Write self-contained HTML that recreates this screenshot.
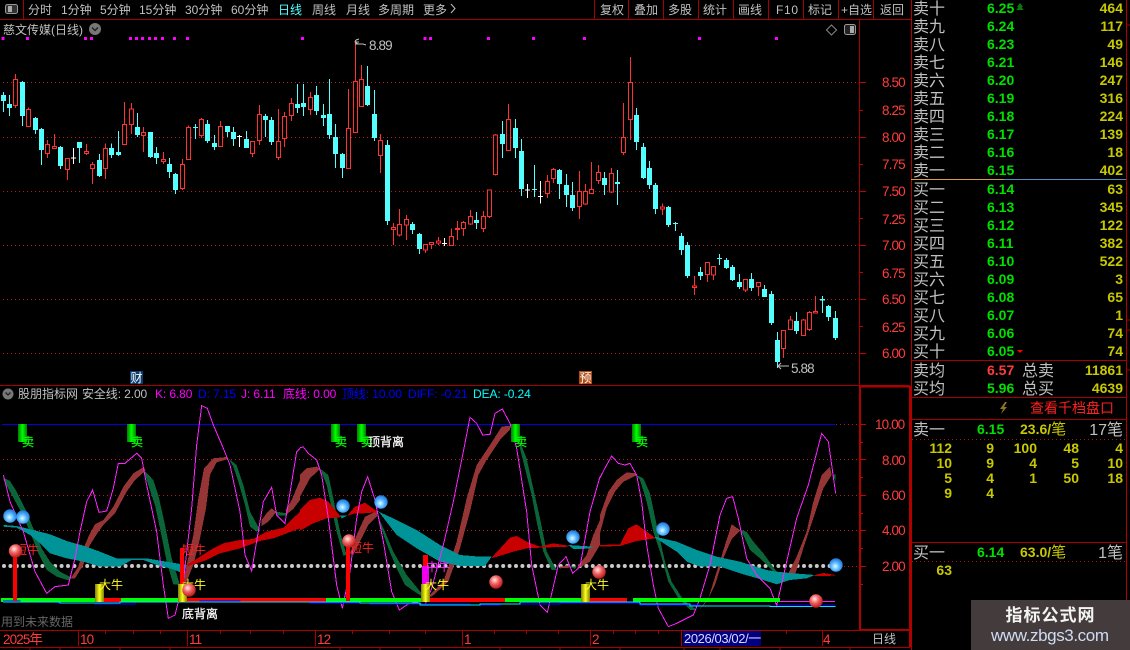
<!DOCTYPE html>
<html><head><meta charset="utf-8"><title>K线</title>
<style>
html,body{margin:0;padding:0;background:#000;width:1130px;height:650px;overflow:hidden}
svg{display:block;position:absolute;left:0;top:0}
text{font-family:"Liberation Sans","WenQuanYi Zen Hei","Noto Sans CJK SC",sans-serif;white-space:pre}
.t{font-size:12px;fill:#c0c0c0}
.l{font-size:16px;fill:#c0c0c0}
.a{font-size:13.5px;letter-spacing:-.9px;fill:#ff3c3c}
.g{font-size:14px;font-weight:bold;fill:#00e000}
.y{font-size:14px;font-weight:bold;fill:#c8c800;text-anchor:end}
.h{font-size:12px;letter-spacing:-.1px}
</style></head><body>
<svg width="1130" height="650" viewBox="0 0 1130 650" xmlns="http://www.w3.org/2000/svg">
<defs>
<radialGradient id="rb" cx=".4" cy=".35" r=".7"><stop offset="0" stop-color="#ffe8e8"/><stop offset=".45" stop-color="#f06060"/><stop offset="1" stop-color="#b01010"/></radialGradient>
<radialGradient id="bb" cx=".45" cy=".6" r=".65"><stop offset="0" stop-color="#d8ffff"/><stop offset=".5" stop-color="#50b0ff"/><stop offset="1" stop-color="#1468c8"/></radialGradient>
<linearGradient id="yb"><stop offset="0" stop-color="#808000"/><stop offset=".5" stop-color="#ffff20"/><stop offset="1" stop-color="#808000"/></linearGradient>
<linearGradient id="gb"><stop offset="0" stop-color="#008000"/><stop offset=".5" stop-color="#00ff00"/><stop offset="1" stop-color="#008000"/></linearGradient>
</defs>
<rect width="1130" height="650" fill="#000"/>

<!-- toolbar -->
<g shape-rendering="crispEdges" fill="none" stroke="#a80000">
<path d="M0 19.5H911M23.5 0V19M594.5 0V19M628.5 0V19M663.5 0V19M698.5 0V19M733.5 0V19M768.5 0V19M803.5 0V19M838.5 0V19M873.5 0V19"/>
<path d="M859.5 19V385M0 385.5H910M859.5 385V630" stroke-width="1"/>
<path d="M860 386.5H910M860 630H910M860 386V630M910 386V647" stroke="#b00000" stroke-width="2"/>
<path d="M0 630.5H910M0 647.5H910M78.5 631V646M187.5 631V646M315.5 631V646M462.5 631V646M590.5 631V646M681.5 631V646M822.5 631V646"/>
<path d="M105.5 631v3M133.5 631v3M160.5 631v3M220.5 631v3M250.5 631v3M283.5 631v3M352.5 631v3M389.5 631v3M425.5 631v3M494.5 631v3M526.5 631v3M558.5 631v3M613.5 631v3M635.5 631v3M658.5 631v3M786.5 631v3"/>
<path d="M30 647v3M60 647v3M120 647v3M170 647v3M340 647v3M380 647v3M420 647v3M500 647v3M560 647v3M620 647v3M684 647v3M720 647v3M780 647v3M850 647v3"/>
<path d="M911.5 0V650M1126.5 0V650" stroke="#b00000"/>
<path d="M911 360.5H1126M911 397.5H1126M911 419.5H1126M911 542.5H1126M1127 25h3M1127 320h3M1127 330h3M1127 370h3"/>
</g>
<rect x="5.5" y="4.5" width="12" height="9" rx="2" fill="#333" stroke="#999"/><rect x="8" y="6" width="4" height="6" fill="#aaa"/>
<g class="t">
<text x="28" y="14" class="t">分时</text><text x="61" y="14" class="t">1分钟</text><text x="100" y="14" class="t">5分钟</text><text x="139" y="14" class="t">15分钟</text><text x="185" y="14" class="t">30分钟</text><text x="231" y="14" class="t">60分钟</text>
<text x="278" y="14" class="t" style="fill:#54ffff">日线</text><text x="312" y="14" class="t">周线</text><text x="346" y="14" class="t">月线</text><text x="378" y="14" class="t">多周期</text><text x="423" y="14" class="t">更多</text>
<path d="M451 4l4 4.5-4 4.5" fill="none" stroke="#c0c0c0"/>
<text x="600" y="14" class="t">复权</text><text x="634" y="14" class="t">叠加</text><text x="668" y="14" class="t">多股</text><text x="703" y="14" class="t">统计</text><text x="738" y="14" class="t">画线</text><text x="776" y="14" class="t" style="letter-spacing:.7px">F10</text><text x="808" y="14" class="t">标记</text><text x="841" y="14" class="t">+自选</text><text x="880" y="14" class="t">返回</text>
</g>

<!-- main chart title -->
<text x="3" y="34" class="t">慈文传媒(日线)</text>
<circle cx="95" cy="29" r="6" fill="#777"/><path d="M92 27.5l3 3 3-3" fill="none" stroke="#222" stroke-width="1.5"/>
<path d="M831.5 25l5 5-5 5-5-5z" fill="none" stroke="#888"/>
<rect x="844.5" y="24.5" width="11" height="10" rx="2" fill="#222" stroke="#999"/><rect x="850" y="26" width="4" height="7" fill="#aaa"/>

<!-- grid -->
<g fill="none" stroke="#b02020" stroke-dasharray="1 3" shape-rendering="crispEdges">
<path d="M3 82.5H859M3 137.5H859M3 191.5H859M3 245.5H859M3 299.5H859M3 353.5H859"/>
<path d="M3 459.5H835M3 495.5H835M3 530.5H835M836 424.5H859M836 566.5H859M836 459.5H859M836 495.5H859M836 530.5H859"/>
</g>
<path shape-rendering="crispEdges" fill="none" stroke="#c80000" d="M860 82.5h6M860 110.5h3M860 137.5h6M860 164.5h3M860 191.5h6M860 218.5h3M860 245.5h6M860 272.5h3M860 299.5h6M860 326.5h3M860 353.5h6M860 424.5h6M860 442.5h3M860 459.5h6M860 477.5h3M860 495.5h6M860 513.5h3M860 530.5h6M860 548.5h3M860 566.5h6M860 584.5h3"/>
<g class="a"><text x="882" y="87" class="a">8.50</text><text x="882" y="115" class="a">8.25</text><text x="882" y="142" class="a">8.00</text><text x="882" y="169" class="a">7.75</text><text x="882" y="196" class="a">7.50</text><text x="882" y="224" class="a">7.25</text><text x="882" y="250" class="a">7.00</text><text x="882" y="278" class="a">6.75</text><text x="882" y="304" class="a">6.50</text><text x="882" y="332" class="a">6.25</text><text x="882" y="358" class="a">6.00</text>
<text x="875" y="429" class="a">10.00</text><text x="882" y="465" class="a">8.00</text><text x="882" y="500" class="a">6.00</text><text x="882" y="535" class="a">4.00</text><text x="882" y="571" class="a">2.00</text></g>

<!-- markers -->
<path fill="#ff00ff" shape-rendering="crispEdges" d="M4 111h9v9h-9zM78 111h9v9h-9zM252 111h9v9h-9zM270 111h9v9h-9zM387 111h9v9h-9zM405 111h9v9h-9zM423 111h9v9h-9zM444 111h9v9h-9zM462 111h9v9h-9zM483 111h9v9h-9zM519 111h9v9h-9zM558 111h9v9h-9zM903 111h9v9h-9zM1270 111h9v9h-9zM1287 111h9v9h-9zM1461 111h9v9h-9zM1596 111h9v9h-9zM1749 111h9v9h-9zM2094 111h9v9h-9zM2325 111h9v9h-9z" transform="scale(.33333)"/>

<!-- candles -->
<g transform="scale(.33333)" shape-rendering="crispEdges">
<path fill="none" stroke="#ff3232" stroke-width="3" d="M46 222V324M85 322V380M142 420V474M163 402V447M202 474V540M259 432V465M277 486V552M316 430V537M373 306V435M394 309V402M430 381V456M490 456V492M547 477V570M565 376V480M604 354V414M661 363V441M757 424V471M778 315V435M835 327V480M853 336V441M874 294V363M931 276V345M1045 267V507M1066 120V399M1084 195V321M1141 402V519M1180 669V735M1198 627V710M1219 645V720M1276 733V759M1294 726V747M1315 711V735M1354 685V738M1372 663V720M1390 663V708M1411 630V675M1450 633V696M1468 568V654M1487 402V527M1525 312V453M1642 525V594M1660 504V549M1738 513V657M1756 552V615M1774 486V581M1795 495V552M1834 504V579M1870 309V465M1891 171V420M1987 610V645M2083 828V885M2122 786V846M2140 798V840M2236 837V876M2275 847V888M2350 990V1074M2371 948V990M2410 957V1008M2428 933V993M2446 888V939"/>
<path fill="#000" stroke="#ff3232" stroke-width="3" d="M40 238h12v79h-12zM79 328h12v52h-12zM136 433h12v28h-12zM157 439h12v7h-12zM196 475h12v34h-12zM253 454h12v6h-12zM271 493h12v13h-12zM310 445h12v61h-12zM367 373h12v61h-12zM388 327h12v46h-12zM424 397h12v9h-12zM484 478h12v7h-12zM541 493h12v73h-12zM559 382h12v97h-12zM598 358h12v49h-12zM655 379h12v61h-12zM751 424h12v37h-12zM772 343h12v78h-12zM829 424h12v49h-12zM847 349h12v67h-12zM868 310h12v37h-12zM925 292h12v37h-12zM1039 385h12v121h-12zM1060 244h12v154h-12zM1078 238h12v82h-12zM1135 421h12v45h-12zM1174 682h12v7h-12zM1192 673h12v32h-12zM1213 658h12v17h-12zM1270 733h12v17h-12zM1288 727h12v6h-12zM1309 723h12v6h-12zM1348 709h12v27h-12zM1366 685h12v3h-12zM1384 667h12v19h-12zM1405 649h12v23h-12zM1444 649h12v36h-12zM1462 570h12v80h-12zM1481 405h12v119h-12zM1519 358h12v94h-12zM1636 544h12v37h-12zM1654 508h12v28h-12zM1732 574h12v46h-12zM1750 574h12v38h-12zM1768 568h12v13h-12zM1789 517h12v25h-12zM1828 520h12v56h-12zM1864 412h12v46h-12zM1885 247h12v111h-12zM1981 621h12v6h-12zM2077 858h12v5h-12zM2116 787h12v37h-12zM2134 799h12v26h-12zM2230 838h12v32h-12zM2269 847h12v13h-12zM2344 991h12v55h-12zM2365 960h12v29h-12zM2404 960h12v47h-12zM2422 937h12v52h-12zM2440 934h12v5h-12z"/>
<path fill="none" stroke="#54ffff" stroke-width="3" d="M10 276V336M28 285V348M67 243V378M106 351V402M124 384V495M181 438V507M238 426V489M298 462V531M334 430V474M355 393V468M412 339V411M451 396V474M469 441V492M508 474V534M526 519V582M586 372V417M622 360V429M643 405V450M682 378V411M700 381V438M739 393V444M796 342V411M814 351V435M892 252V339M910 252V348M949 258V345M970 312V378M988 237V417M1006 372V504M1027 459V534M1102 198V318M1123 270V423M1162 420V675M1237 666V702M1258 699V762M1429 636V687M1507 363V474M1546 357V474M1564 417V588M1603 495V591M1678 507V597M1699 522V621M1717 546V633M1813 516V585M1852 510V615M1909 324V450M1930 429V537M1948 483V567M1966 549V642M2005 618V681M2026 666V693M2044 699V765M2062 726V834M2101 801V840M2158 762V795M2179 774V807M2197 795V843M2218 822V867M2254 819V873M2293 855V891M2314 873V975M2332 996V1104M2389 936V1002M2467 888V939M2485 915V963M2506 933V1020"/>
<path fill="#54ffff" d="M3 285h15v18h-15zM21 312h15v12h-15zM60 246h15v102h-15zM99 354h15v36h-15zM117 387h15v63h-15zM174 441h15v57h-15zM231 426h15v18h-15zM291 480h15v48h-15zM327 444h15v21h-15zM348 456h15v9h-15zM405 381h15v24h-15zM444 396h15v75h-15zM462 459h15v15h-15zM501 492h15v24h-15zM519 522h15v48h-15zM579 381h15v3h-15zM615 372h15v51h-15zM636 429h15v12h-15zM675 378h15v18h-15zM693 396h15v21h-15zM732 417h15v27h-15zM789 348h15v12h-15zM807 360h15v66h-15zM885 312h15v12h-15zM903 309h15v12h-15zM942 285h15v48h-15zM963 345h15v9h-15zM981 342h15v63h-15zM999 411h15v51h-15zM1020 462h15v42h-15zM1095 258h15v57h-15zM1116 342h15v72h-15zM1155 435h15v228h-15zM1230 672h15v18h-15zM1251 702h15v45h-15zM1422 660h15v9h-15zM1500 402h15v30h-15zM1539 384h15v60h-15zM1557 453h15v114h-15zM1596 567h15v3h-15zM1671 510h15v42h-15zM1692 555h15v30h-15zM1710 585h15v39h-15zM1806 534h15v21h-15zM1845 546h15v6h-15zM1902 345h15v81h-15zM1923 441h15v93h-15zM1941 504h15v51h-15zM1959 555h15v72h-15zM1998 621h15v54h-15zM2019 669h15v3h-15zM2037 708h15v42h-15zM2055 735h15v93h-15zM2094 816h15v12h-15zM2151 774h15v3h-15zM2172 780h15v24h-15zM2190 801h15v39h-15zM2211 846h15v15h-15zM2247 837h15v27h-15zM2286 867h15v24h-15zM2307 882h15v87h-15zM2325 1020h15v66h-15zM2382 963h15v30h-15zM2460 897h15v5h-15zM2478 918h15v33h-15zM2499 954h15v60h-15z"/>
<path fill="none" stroke="#fff" stroke-width="3" d="M220 444V492M213 474h15M718 405V441M711 409h15M1333 714V738M1326 730h15M1582 552V594M1575 570h15M1621 543V610M1614 590h15"/>
</g>

<!-- hi/lo labels -->
<g fill="none" stroke="#c0c0c0"><path d="M356 40l-1 2 3 2-3 0 8 0 3 1"/><path d="M356 40l3-1M356 42h3"/><path d="M778 366h11M778 366l3-3M778 366l3 3"/></g>
<text x="369" y="50" class="a" style="fill:#c0c0c0">8.89</text>
<text x="791" y="373" class="a" style="fill:#c0c0c0">5.88</text>
<rect x="130" y="371" width="13" height="13" fill="#0a3c6e"/><text x="130.5" y="382" style="font-size:12px;fill:#fff">财</text>
<rect x="579" y="371" width="13" height="13" fill="#b04a14"/><text x="579.5" y="382" style="font-size:12px;fill:#fff">预</text>

<!-- indicator header -->
<circle cx="8" cy="394" r="5.5" fill="#777"/><path d="M5.5 392.5l2.5 2.5 2.5-2.5" fill="none" stroke="#222" stroke-width="1.3"/>
<text x="18" y="398" class="t">股朋指标网</text>
<text x="82" y="398" class="h" style="fill:#c0c0c0">安全线: 2.00</text>
<text x="155" y="398" class="h" style="fill:#ff00ff">K: 6.80</text>
<text x="198" y="398" class="h" style="fill:#0000ff">D: 7.15</text>
<text x="241" y="398" class="h" style="fill:#ff00ff">J: 6.11</text>
<text x="283" y="398" class="h" style="fill:#ff00ff">底线: 0.00</text>
<text x="342" y="398" class="h" style="fill:#0000ff">顶线: 10.00</text>
<text x="408" y="398" class="h" style="fill:#0000ff">DIFF: -0.21</text>
<text x="473" y="398" class="h" style="fill:#00ffff">DEA: -0.24</text>

<path d="M2 424.5H835" stroke="#0000e0" shape-rendering="crispEdges"/>
<path d="M4 566H835" stroke="#c8c8c8" stroke-width="4" stroke-linecap="round" stroke-dasharray="0 6.4"/>

<!-- ribbons -->
<g shape-rendering="crispEdges">
<g transform="translate(0 385) scale(.33333)">
<g fill="#0a6638"><path d="M10 278L30 288 50 320 75 370 100 430 125 490 150 530 180 560 215 578 205 586 170 575 140 555 115 505 90 440 60 375 30 320 10 285z"/><path d="M435 258L460 285 475 330 495 420 515 520 540 600 520 598 500 530 480 430 465 360 445 300 435 268z"/><path d="M685 220L710 240 730 300 750 380 780 435 770 440 750 425 735 360 715 290 700 245z"/><path d="M830 380L860 385 860 392 830 392z"/></g>
<g fill="#953535"><path d="M212 580L235 545 250 490 270 445 285 418 310 405 340 365 370 305 400 265 432 245 436 258 405 285 380 320 345 385 310 420 295 440 270 480 250 540 225 580z"/><path d="M545 600L560 540 580 450 595 340 612 250 640 220 680 216 685 222 650 232 630 270 618 370 600 460 580 540 560 590z"/><path d="M785 405L800 385 815 370 830 382 820 392 805 410 785 423z"/><path d="M857 375L875 345 900 285 900 345 880 372 860 388z"/></g>
<path fill="#c80000" d="M560 540L600 515 640 490 670 475 720 465 760 462 800 440 850 428 900 380 900 430 860 445 820 460 780 468 720 490 660 505 620 525 590 535 565 543z"/>
<path fill="#009498" d="M10 420L50 423 100 435 150 448 200 468 250 482 300 500 350 520 400 520 440 520 500 530 560 540 550 565 510 550 470 540 430 525 395 525 360 545 300 545 250 530 200 520 150 505 120 475 90 450 50 428 10 425z"/>
</g>
<g transform="translate(300 385) scale(.33333)">
<g fill="#0a6638"><path d="M62 252L85 270 100 340 120 440 140 510 130 512 110 440 95 370 80 300 65 262z"/><path d="M232 390L255 440 280 500 320 570 365 625 362 632 315 600 290 550 265 490 240 420z"/><path d="M660 170L680 220 700 310 720 400 740 500 770 555 755 555 730 500 710 410 695 330 675 250 660 190z"/><path d="M810 545L830 545 825 552z"/></g>
<g fill="#953535"><path d="M0 270L20 250 50 245 60 252 30 280 0 335z"/><path d="M150 505L170 450 195 395 230 378 232 392 205 420 180 470 160 510z"/><path d="M385 635L430 590 470 470 500 340 530 240 570 180 605 125 630 122 630 135 600 165 560 225 535 270 510 380 480 490 445 590 395 635z"/><path d="M780 545L810 540 810 548 780 550z"/><path d="M830 548L860 510 880 450 900 405 900 480 870 530 845 545z"/></g>
<g fill="#c80000"><path d="M0 375L30 345 60 338 85 350 120 392 120 397 80 400 40 415 0 437z"/><path d="M142 392L165 365 195 353 230 378 230 382 190 385 165 385z"/><path d="M575 518L630 458 650 453 680 470 720 485 760 475 805 482 805 485 720 488 680 490 640 500 575 520z"/></g>
<g fill="#009498"><path d="M120 392L142 392 125 400z"/><path d="M232 378L290 405 350 435 420 480 480 510 540 515 575 515 555 543 480 543 420 530 350 490 290 450 240 385z"/><path d="M805 480L880 485 865 491 820 492z"/></g>
</g>
<g transform="translate(600 385) scale(.33333)">
<g fill="#0a6638"><path d="M108 270L130 280 150 325 170 420 195 530 215 590 250 645 290 675 270 675 235 640 205 590 180 500 160 440 140 350 120 285z"/><path d="M420 435L440 440 460 470 490 505 530 560 520 560 480 520 450 495 430 450z"/><path d="M697 272L707 267 707 288z"/></g>
<g fill="#953535"><path d="M0 390L25 320 50 285 80 262 108 265 108 272 70 290 45 320 20 370 0 445z"/><path d="M300 670L325 640 350 560 375 480 395 418 420 435 418 440 395 462 370 520 345 600 320 650 300 672z"/><path d="M565 565L590 515 620 440 640 350 665 270 690 245 695 270 670 310 640 400 610 490 585 570z"/></g>
<g fill="#c80000"><path d="M0 480L60 478 85 430 110 418 140 440 165 458 165 460 110 468 60 483 0 485z"/><path d="M645 570L670 564 707 570 707 572 645 573z"/></g>
<path fill="#009498" d="M165 455L230 470 290 495 350 515 420 530 500 555 530 560 580 565 645 570 620 580 570 585 530 598 490 585 420 565 360 545 300 545 260 530 230 500 165 458z"/>
</g>

<!-- KDJ -->
<g fill="none" stroke="#ff20ff" stroke-width="3">
<path transform="translate(0 385) scale(.33333)" d="M10 270L30 350 70 440 105 560 140 625 165 605 205 600 225 520 240 440 260 350 278 315 297 382 320 378 340 310 355 235 375 235 410 205 425 220 440 300 470 440 490 600 505 700 525 690 550 590 575 370 590 180 605 62 622 70 640 120 670 190 690 240 720 380 735 510 755 558 790 350 815 307 830 390 855 415 890 200 900 190"/>
<path transform="translate(300 385) scale(.33333)" d="M0 188L10 186 25 205 50 225 65 270 85 400 110 600 127 670 150 560 170 400 185 320 203 275 225 345 250 470 275 620 298 675 320 660 345 650 375 660 395 610 430 480 460 350 490 200 510 97 530 115 548 150 570 148 585 85 607 72 630 115 650 190 680 380 695 540 720 660 742 682 775 540 798 515 818 565 840 545 870 380 900 275"/>
<path transform="translate(600 385) scale(.33333)" d="M0 278L20 240 35 213 55 235 75 240 90 235 110 270 125 350 140 480 160 600 175 670 205 725 230 715 280 690 300 640 330 540 360 390 380 340 398 335 415 400 440 520 470 570 510 610 530 662 560 530 590 400 625 300 665 145 685 170 695 240 707 325"/>
</g>

<!-- lower line set -->
<path d="M1 600H95" stroke="#00ff00" stroke-width="4"/>
<path d="M104 600H121M187 600H326M430 600H505M581 600H627" stroke="#ff0000" stroke-width="4"/>
<path d="M121 600H178M326 600H421M505 600H581M633 600H780" stroke="#00ff00" stroke-width="4"/>
<path d="M780 601.5H835" stroke="#ff20ff"/>
<path fill="none" stroke="#0000ff" d="M3 601H20V602H58V603H95V604H135V602H200V601H240V602H310V603H370V604H470V605H500V604H560V603H640V605H700V606H780V605H835"/>
<path fill="none" stroke="#00e8ff" d="M3 602H60V603H120V602H200V602H290V602H360V603H420V605H480V604H520V602H640V604H690V606H770V606.5H835V606"/>

<!-- bars -->
<path fill="#ff0000" d="M13 552h4v49h-4zM180 548h4v40h-4zM346 545h4v56h-4zM423 555h5v25h-5z"/>
<rect x="422" y="566" width="7" height="34" fill="#ee00ee"/>
<g fill="url(#yb)"><rect x="95" y="584" width="9" height="18"/><rect x="178" y="584" width="9" height="18"/><rect x="421" y="584" width="9" height="18"/><rect x="581" y="584" width="9" height="18"/></g>
<g fill="url(#gb)"><rect x="18" y="424" width="9" height="18"/><rect x="127" y="424" width="9" height="18"/><rect x="331" y="424" width="9" height="18"/><rect x="357" y="424" width="9" height="18"/><rect x="511" y="424" width="9" height="18"/><rect x="632" y="424" width="9" height="18"/></g>
</g>

<g fill="#00ff00" style="font-size:12px">
<text x="22" y="446" style="font-size:12px;fill:#00ff00;stroke:#00ff00;stroke-width:.25">卖</text><text x="131" y="446" style="font-size:12px;fill:#00ff00;stroke:#00ff00;stroke-width:.25">卖</text><text x="335" y="446" style="font-size:12px;fill:#00ff00;stroke:#00ff00;stroke-width:.25">卖</text><text x="361" y="446" style="font-size:12px;fill:#00ff00;stroke:#00ff00;stroke-width:.25">卖</text><text x="515" y="446" style="font-size:12px;fill:#00ff00;stroke:#00ff00;stroke-width:.25">卖</text><text x="636" y="446" style="font-size:12px;fill:#00ff00;stroke:#00ff00;stroke-width:.25">卖</text>
</g>
<text x="368" y="446" style="font-size:12px;fill:#fff;stroke:#fff;stroke-width:.2">顶背离</text>
<text x="182" y="618" style="font-size:12px;fill:#fff;stroke:#fff;stroke-width:.2">底背离</text>
<g>
<text x="15" y="554" style="font-size:12px;fill:#ff2020">短牛</text><text x="182" y="554" style="font-size:12px;fill:#ff2020">短牛</text><text x="350" y="552" style="font-size:12px;fill:#ff2020">短牛</text>
</g>
<text x="426" y="571" style="font-size:12px;fill:#ff20ff">中牛</text>
<g><text x="99" y="589" style="font-size:12px;fill:#ffff20">大牛</text><text x="182" y="589" style="font-size:12px;fill:#ffff20">大牛</text><text x="425" y="589" style="font-size:12px;fill:#ffff20">大牛</text><text x="585" y="589" style="font-size:12px;fill:#ffff20">大牛</text></g>

<!-- balls -->
<g fill="url(#rb)"><circle cx="15.5" cy="551" r="6.7"/><circle cx="189" cy="590" r="6.7"/><circle cx="349" cy="541" r="6.7"/><circle cx="496" cy="582" r="6.7"/><circle cx="599" cy="572" r="6.7"/><circle cx="816" cy="601" r="6.7"/></g>
<g fill="url(#bb)"><circle cx="10" cy="516" r="6.7"/><circle cx="23" cy="517" r="6.7"/><circle cx="343" cy="506" r="6.7"/><circle cx="381" cy="502" r="6.7"/><circle cx="573" cy="537" r="6.7"/><circle cx="663" cy="529" r="6.7"/><circle cx="836" cy="565" r="6.7"/></g>

<text x="1" y="626" style="font-size:12px;fill:#666">用到未来数据</text>

<!-- date axis -->
<text x="3" y="644" class="a">2025年</text><text x="80" y="644" class="a">10</text><text x="189" y="644" class="a">11</text><text x="317" y="644" class="a">12</text><text x="464" y="644" class="a">1</text><text x="592" y="644" class="a">2</text><text x="823" y="644" class="a">4</text>
<rect x="683" y="631" width="78" height="15" fill="#000080"/>
<text x="684" y="643" style="font-size:13px;fill:#d8d8ff;letter-spacing:-.4px">2026/03/02/一</text>
<text x="872" y="643" class="t">日线</text>

<!-- right panel -->
<path d="M911 179.5H1004" stroke="#d9a040" shape-rendering="crispEdges"/><path d="M1004 179.5H1126" stroke="#4a8fc0" shape-rendering="crispEdges"/>
<path stroke="#a01818" stroke-dasharray="1 3" fill="none" shape-rendering="crispEdges" d="M912 439.5H1125M912 561.5H1125"/>

<text x="913" y="14" class="l">卖十</text><text x="987" y="13" class="g">6.25</text><text x="1123" y="13" class="y">464</text>
<text x="913" y="32" class="l">卖九</text><text x="987" y="31" class="g">6.24</text><text x="1123" y="31" class="y">117</text>
<text x="913" y="50" class="l">卖八</text><text x="987" y="49" class="g">6.23</text><text x="1123" y="49" class="y">49</text>
<text x="913" y="68" class="l">卖七</text><text x="987" y="67" class="g">6.21</text><text x="1123" y="67" class="y">146</text>
<text x="913" y="86" class="l">卖六</text><text x="987" y="85" class="g">6.20</text><text x="1123" y="85" class="y">247</text>
<text x="913" y="104" class="l">卖五</text><text x="987" y="103" class="g">6.19</text><text x="1123" y="103" class="y">316</text>
<text x="913" y="122" class="l">卖四</text><text x="987" y="121" class="g">6.18</text><text x="1123" y="121" class="y">224</text>
<text x="913" y="140" class="l">卖三</text><text x="987" y="139" class="g">6.17</text><text x="1123" y="139" class="y">139</text>
<text x="913" y="158" class="l">卖二</text><text x="987" y="157" class="g">6.16</text><text x="1123" y="157" class="y">18</text>
<text x="913" y="176" class="l">卖一</text><text x="987" y="175" class="g">6.15</text><text x="1123" y="175" class="y">402</text>
<text x="913" y="195" class="l">买一</text><text x="987" y="194" class="g">6.14</text><text x="1123" y="194" class="y">63</text>
<text x="913" y="213" class="l">买二</text><text x="987" y="212" class="g">6.13</text><text x="1123" y="212" class="y">345</text>
<text x="913" y="231" class="l">买三</text><text x="987" y="230" class="g">6.12</text><text x="1123" y="230" class="y">122</text>
<text x="913" y="249" class="l">买四</text><text x="987" y="248" class="g">6.11</text><text x="1123" y="248" class="y">382</text>
<text x="913" y="267" class="l">买五</text><text x="987" y="266" class="g">6.10</text><text x="1123" y="266" class="y">522</text>
<text x="913" y="285" class="l">买六</text><text x="987" y="284" class="g">6.09</text><text x="1123" y="284" class="y">3</text>
<text x="913" y="303" class="l">买七</text><text x="987" y="302" class="g">6.08</text><text x="1123" y="302" class="y">65</text>
<text x="913" y="321" class="l">买八</text><text x="987" y="320" class="g">6.07</text><text x="1123" y="320" class="y">1</text>
<text x="913" y="339" class="l">买九</text><text x="987" y="338" class="g">6.06</text><text x="1123" y="338" class="y">74</text>
<text x="913" y="357" class="l">买十</text><text x="987" y="356" class="g">6.05</text><text x="1123" y="356" class="y">74</text>
<path fill="#0a7a0a" d="M1020 3l3 4h-1.5l2 3h-7l2-3H1017z"/>
<path fill="#ff0000" d="M1017 350h6l-3 3z"/>

<text x="913" y="376" class="l">卖均</text><text x="987" y="375" class="g" style="fill:#ff3c3c">6.57</text><text x="1022" y="376" class="l">总卖</text><text x="1123" y="375" class="y">11861</text>
<text x="913" y="394" class="l">买均</text><text x="987" y="393" class="g">5.96</text><text x="1022" y="394" class="l">总买</text><text x="1123" y="393" class="y">4639</text>

<path fill="#8a7428" d="M1005 402l-5 7h3l-2 5 6-7h-3l3-5z"/>
<text x="1030" y="413" style="font-size:14px;fill:#ff2020">查看千档盘口</text>

<text x="913" y="435" class="l">卖一</text><text x="977" y="434" class="g">6.15</text><text x="1020" y="434" style="font-size:14px;font-weight:bold;fill:#c8c800">23.6/<tspan style="font-size:15px;font-weight:normal">笔</tspan></text><text x="1123" y="435" class="l" style="text-anchor:end">17笔</text>
<text x="952" y="453" class="y">112</text><text x="994" y="453" class="y">9</text><text x="1037" y="453" class="y">100</text><text x="1079" y="453" class="y">48</text><text x="1123" y="453" class="y">4</text>
<text x="952" y="468" class="y">10</text><text x="994" y="468" class="y">9</text><text x="1037" y="468" class="y">4</text><text x="1079" y="468" class="y">5</text><text x="1123" y="468" class="y">10</text>
<text x="952" y="483" class="y">5</text><text x="994" y="483" class="y">4</text><text x="1037" y="483" class="y">1</text><text x="1079" y="483" class="y">50</text><text x="1123" y="483" class="y">18</text>
<text x="952" y="498" class="y">9</text><text x="994" y="498" class="y">4</text>

<text x="913" y="558" class="l">买一</text><text x="977" y="557" class="g">6.14</text><text x="1020" y="557" style="font-size:14px;font-weight:bold;fill:#c8c800">63.0/<tspan style="font-size:15px;font-weight:normal">笔</tspan></text><text x="1123" y="558" class="l" style="text-anchor:end">1笔</text>
<text x="952" y="575" class="y">63</text>

<!-- watermark -->
<rect x="971" y="600" width="159" height="50" fill="#443c3c"/>
<text x="1050" y="621" style="font-size:17px;font-weight:bold;fill:#f4f4f4;text-anchor:middle" textLength="89">指标公式网</text>
<text x="1050" y="641" style="font-size:17px;fill:#d0dcf4;text-anchor:middle" textLength="118">www.zbgs3.com</text>
</svg>
</body></html>
